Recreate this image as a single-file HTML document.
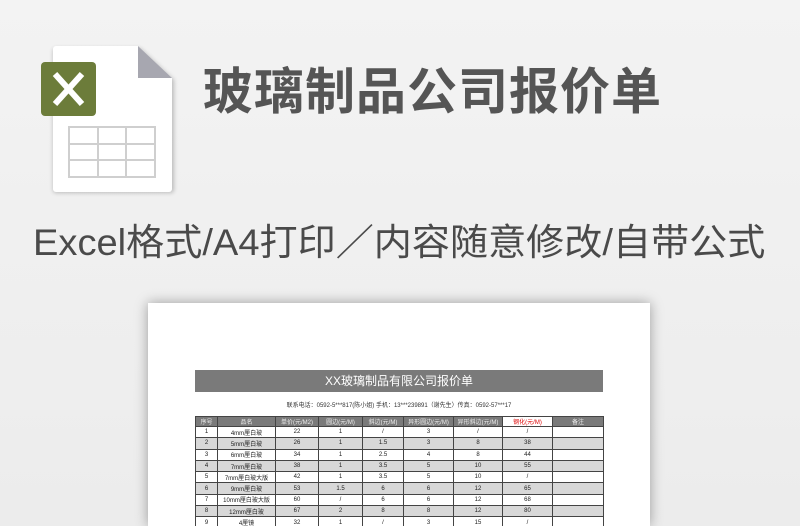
<!DOCTYPE html>
<html style="overflow:hidden;width:800px;height:526px"><head><meta charset="utf-8"><style>
*{margin:0;padding:0;box-sizing:border-box}
body{width:800px;height:526px;overflow:hidden;background:linear-gradient(180deg,#f3f3f3,#ececec);position:relative;font-family:"Liberation Sans","Noto Sans CJK SC",sans-serif}
.t1{position:absolute;left:203px;top:52px;font-size:50px;font-weight:bold;color:#555;letter-spacing:1px;white-space:nowrap}
.t2{position:absolute;left:33px;top:212px;font-size:37px;color:#4a4a4a;white-space:nowrap;transform-origin:0 0}
.paper{position:absolute;left:148px;top:303px;width:502px;height:223px;background:#fff;box-shadow:0 0 12px rgba(0,0,0,.35)}
.bar{position:absolute;left:195px;top:370px;width:408px;height:22px;background:#7a7a7a;color:#fff;font-size:12px;text-align:center;line-height:22px}
.info{position:absolute;left:195px;top:400px;width:408px;text-align:center;font-size:6px;color:#333}
table{position:absolute;left:195px;top:416px;border-collapse:collapse;font-size:6px;text-align:center;table-layout:fixed}
td{border:1px solid #444;height:11.3px;padding:0;color:#222}
tr.h td{background:#7a7a7a;color:#eee;height:9px}
tr.g td{background:#d8d8d8}
</style></head><body>
<svg style="position:absolute;left:36px;top:40px" width="145" height="160" viewBox="36 40 145 160">
<defs><filter id="s"><feGaussianBlur stdDeviation="2"/></filter></defs>
<path d="M56 48H140L174 80V190a3 3 0 0 1-3 3H56a3 3 0 0 1-3-3V51a3 3 0 0 1 3-3z" fill="#bbb" filter="url(#s)"/>
<path d="M56 46H138L172 78V189a3 3 0 0 1-3 3H56a3 3 0 0 1-3-3V49a3 3 0 0 1 3-3z" fill="#fff"/>
<path d="M138 46V78H172z" fill="#a7a7b0"/>
<rect x="41" y="62" width="55" height="54" rx="4" fill="#6c7c3a"/>
<path d="M55 74L82 104M82 74L55 104" stroke="#fff" stroke-width="6"/>
<g fill="none" stroke="#cfcfcf" stroke-width="2"><rect x="69" y="127" width="86" height="50"/><path d="M69 144H155M69 160H155M98 127V177M126 127V177"/></g>
</svg>
<div class="t1">玻璃制品公司报价单</div>
<div class="t2" id="t2">Excel格式/A4打印／内容随意修改/自带公式</div>
<div class="paper"></div>
<div class="bar">XX玻璃制品有限公司报价单</div>
<div class="info">联系电话：0592-5***817(陈小姐) 手机：13***239891（谢先生）传真：0592-57***17</div>
<table>
<colgroup><col style="width:22px"><col style="width:58px"><col style="width:43px"><col style="width:44px"><col style="width:41px"><col style="width:50px"><col style="width:49px"><col style="width:50px"><col style="width:51px"></colgroup>
<tr class="h"><td>序号</td><td>品名</td><td>单价(元/M2)</td><td>圆边(元/M)</td><td>斜边(元/M)</td><td>异形圆边(元/M)</td><td>异形斜边(元/M)</td><td style="background:#fff;color:#d00">钢化(元/M)</td><td>备注</td></tr>
<tr><td>1</td><td>4mm厘白玻</td><td>22</td><td>1</td><td>/</td><td>3</td><td>/</td><td>/</td><td></td></tr>
<tr class="g"><td>2</td><td>5mm厘白玻</td><td>26</td><td>1</td><td>1.5</td><td>3</td><td>8</td><td>38</td><td></td></tr>
<tr><td>3</td><td>6mm厘白玻</td><td>34</td><td>1</td><td>2.5</td><td>4</td><td>8</td><td>44</td><td></td></tr>
<tr class="g"><td>4</td><td>7mm厘白玻</td><td>38</td><td>1</td><td>3.5</td><td>5</td><td>10</td><td>55</td><td></td></tr>
<tr><td>5</td><td>7mm厘白玻大版</td><td>42</td><td>1</td><td>3.5</td><td>5</td><td>10</td><td>/</td><td></td></tr>
<tr class="g"><td>6</td><td>9mm厘白玻</td><td>53</td><td>1.5</td><td>6</td><td>6</td><td>12</td><td>65</td><td></td></tr>
<tr><td>7</td><td>10mm厘白玻大版</td><td>60</td><td>/</td><td>6</td><td>6</td><td>12</td><td>68</td><td></td></tr>
<tr class="g"><td>8</td><td>12mm厘白玻</td><td>67</td><td>2</td><td>8</td><td>8</td><td>12</td><td>80</td><td></td></tr>
<tr><td>9</td><td>4厘镜</td><td>32</td><td>1</td><td>/</td><td>3</td><td>15</td><td>/</td><td></td></tr>
</table>
<script>var e=document.getElementById('t2');e.style.transform='scaleX('+(732/e.offsetWidth)+')';</script>
</body></html>
